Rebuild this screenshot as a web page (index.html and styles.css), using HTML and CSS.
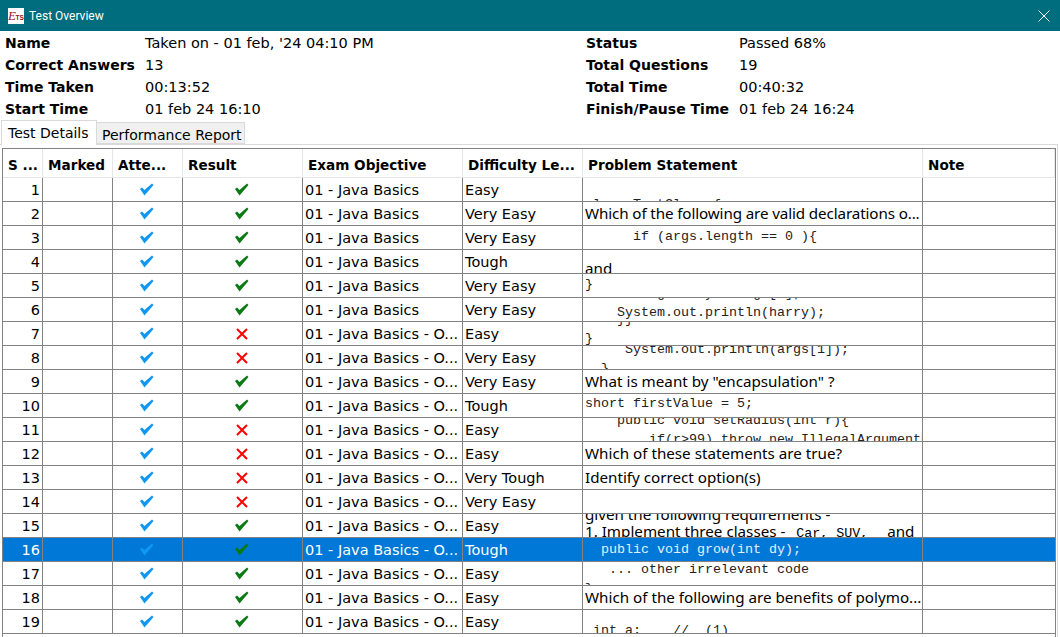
FILE: index.html
```html
<!DOCTYPE html>
<html lang="en">
<head>
    <meta charset="UTF-8">
    <title>Test Overview</title>
    <link rel="stylesheet" href="styles.css">
</head>
<body>
    <svg class="defs" width="0" height="0">
        <symbol id="tick" viewBox="0 0 14 13"><path d="M0 6 L2 4.500 L4.500 7 L12 0.500 L13.500 2 L4.500 12.500 Z"/></symbol>
        <symbol id="cross" viewBox="0 0 12 12"><path d="M1 1 L11 11 M11 1 L1 11" fill="none" stroke="#f00" stroke-width="2"/></symbol>
    </svg>
    <header class="titlebar">
        <span class="logo"><svg width="16" height="16" viewBox="0 0 16 16"><text x="0" y="12" class="logo-e">E</text><text x="7.500" y="12" class="logo-ts">TS</text></svg></span>
        <span class="title">Test Overview</span>
        <svg class="close" width="12" height="12" viewBox="0 0 12 12"><path d="M0.500 0.500 L11.500 11.500 M11.500 0.500 L0.500 11.500" stroke="#fff" fill="none"/></svg>
    </header>
    <section class="info">
        <div class="info-col left">
            <b>Name</b><span>Taken on - 01 feb, '24 04:10 PM</span>
            <b>Correct Answers</b><span>13</span>
            <b>Time Taken</b><span>00:13:52</span>
            <b>Start Time</b><span>01 feb 24 16:10</span>
        </div>
        <div class="info-col right">
            <b>Status</b><span>Passed 68%</span>
            <b>Total Questions</b><span>19</span>
            <b>Total Time</b><span>00:40:32</span>
            <b>Finish/Pause Time</b><span>01 feb 24 16:24</span>
        </div>
    </section>
    <nav class="tabs">
        <a class="tab active">Test Details</a>
        <a class="tab">Performance Report</a>
    </nav>
    <div class="panel">
        <div class="table">
            <div class="row head">
                <div>S ...</div><div>Marked</div><div>Atte...</div><div>Result</div><div>Exam Objective</div><div>Difficulty Le...</div><div>Problem Statement</div><div>Note</div>
            </div>
            <div class="row"><div class="num">1</div><div></div><div class="ico"><svg class="tick"><use href="#tick"/></svg></div><div class="ico"><svg class="ok"><use href="#tick"/></svg></div><div>01 - Java Basics</div><div>Easy</div><div class="prob"><pre class="code c1">class TestClass {</pre></div><div></div></div>
            <div class="row"><div class="num">2</div><div></div><div class="ico"><svg class="tick"><use href="#tick"/></svg></div><div class="ico"><svg class="ok"><use href="#tick"/></svg></div><div>01 - Java Basics</div><div>Very Easy</div><div class="prob tight">Which of the following are valid declarations o...</div><div></div></div>
            <div class="row"><div class="num">3</div><div></div><div class="ico"><svg class="tick"><use href="#tick"/></svg></div><div class="ico"><svg class="ok"><use href="#tick"/></svg></div><div>01 - Java Basics</div><div>Very Easy</div><div class="prob"><pre class="code c3">      if (args.length == 0 ){</pre></div><div></div></div>
            <div class="row"><div class="num">4</div><div></div><div class="ico"><svg class="tick"><use href="#tick"/></svg></div><div class="ico"><svg class="ok"><use href="#tick"/></svg></div><div>01 - Java Basics</div><div>Tough</div><div class="prob"><p class="html h4">and</p></div><div></div></div>
            <div class="row"><div class="num">5</div><div></div><div class="ico"><svg class="tick"><use href="#tick"/></svg></div><div class="ico"><svg class="ok"><use href="#tick"/></svg></div><div>01 - Java Basics</div><div>Very Easy</div><div class="prob"><pre class="code c5">}</pre></div><div></div></div>
            <div class="row"><div class="num">6</div><div></div><div class="ico"><svg class="tick"><use href="#tick"/></svg></div><div class="ico"><svg class="ok"><use href="#tick"/></svg></div><div>01 - Java Basics</div><div>Very Easy</div><div class="prob"><pre class="code c6">    String harry = args[0];
    System.out.println(harry);</pre></div><div></div></div>
            <div class="row"><div class="num">7</div><div></div><div class="ico"><svg class="tick"><use href="#tick"/></svg></div><div class="ico"><svg class="no"><use href="#cross"/></svg></div><div>01 - Java Basics - O...</div><div>Easy</div><div class="prob"><pre class="code c7">    }}
}</pre></div><div></div></div>
            <div class="row"><div class="num">8</div><div></div><div class="ico"><svg class="tick"><use href="#tick"/></svg></div><div class="ico"><svg class="no"><use href="#cross"/></svg></div><div>01 - Java Basics - O...</div><div>Very Easy</div><div class="prob"><pre class="code c8">     System.out.println(args[1]);
  }</pre></div><div></div></div>
            <div class="row"><div class="num">9</div><div></div><div class="ico"><svg class="tick"><use href="#tick"/></svg></div><div class="ico"><svg class="ok"><use href="#tick"/></svg></div><div>01 - Java Basics - O...</div><div>Very Easy</div><div class="prob">What is meant by "encapsulation" ?</div><div></div></div>
            <div class="row"><div class="num">10</div><div></div><div class="ico"><svg class="tick"><use href="#tick"/></svg></div><div class="ico"><svg class="ok"><use href="#tick"/></svg></div><div>01 - Java Basics - O...</div><div>Tough</div><div class="prob"><pre class="code c10">short firstValue = 5;</pre></div><div></div></div>
            <div class="row"><div class="num">11</div><div></div><div class="ico"><svg class="tick"><use href="#tick"/></svg></div><div class="ico"><svg class="no"><use href="#cross"/></svg></div><div>01 - Java Basics - O...</div><div>Easy</div><div class="prob"><pre class="code c11">    public void setRadius(int r){
        if(r&gt;99) throw new IllegalArgumentException();</pre></div><div></div></div>
            <div class="row"><div class="num">12</div><div></div><div class="ico"><svg class="tick"><use href="#tick"/></svg></div><div class="ico"><svg class="no"><use href="#cross"/></svg></div><div>01 - Java Basics - O...</div><div>Easy</div><div class="prob">Which of these statements are true?</div><div></div></div>
            <div class="row"><div class="num">13</div><div></div><div class="ico"><svg class="tick"><use href="#tick"/></svg></div><div class="ico"><svg class="no"><use href="#cross"/></svg></div><div>01 - Java Basics - O...</div><div>Very Tough</div><div class="prob">Identify correct option(s)</div><div></div></div>
            <div class="row"><div class="num">14</div><div></div><div class="ico"><svg class="tick"><use href="#tick"/></svg></div><div class="ico"><svg class="no"><use href="#cross"/></svg></div><div>01 - Java Basics - O...</div><div>Very Easy</div><div class="prob"></div><div></div></div>
            <div class="row"><div class="num">15</div><div></div><div class="ico"><svg class="tick"><use href="#tick"/></svg></div><div class="ico"><svg class="ok"><use href="#tick"/></svg></div><div>01 - Java Basics - O...</div><div>Easy</div><div class="prob"><p class="html h15">given the following requirements -</p><p class="html">1. Implement three classes -&nbsp;&nbsp;<span class="inline-code">Car, SUV,</span>&nbsp;&nbsp;and</p></div><div></div></div>
            <div class="row selected"><div class="num">16</div><div></div><div class="ico"><svg class="tick"><use href="#tick"/></svg></div><div class="ico"><svg class="ok"><use href="#tick"/></svg></div><div>01 - Java Basics - O...</div><div>Tough</div><div class="prob"><pre class="code c16">  public void grow(int dy);</pre></div><div></div></div>
            <div class="row"><div class="num">17</div><div></div><div class="ico"><svg class="tick"><use href="#tick"/></svg></div><div class="ico"><svg class="ok"><use href="#tick"/></svg></div><div>01 - Java Basics - O...</div><div>Easy</div><div class="prob"><pre class="code c17">   ... other irrelevant code
}</pre></div><div></div></div>
            <div class="row"><div class="num">18</div><div></div><div class="ico"><svg class="tick"><use href="#tick"/></svg></div><div class="ico"><svg class="ok"><use href="#tick"/></svg></div><div>01 - Java Basics - O...</div><div>Easy</div><div class="prob">Which of the following are benefits of polymo...</div><div></div></div>
            <div class="row"><div class="num">19</div><div></div><div class="ico"><svg class="tick"><use href="#tick"/></svg></div><div class="ico"><svg class="ok"><use href="#tick"/></svg></div><div>01 - Java Basics - O...</div><div>Easy</div><div class="prob"><pre class="code c19"> int a;    //  (1)</pre></div><div></div></div>
        </div>
    </div>
</body>
</html>
```

FILE: styles.css
```css
html, body {
    margin: 0;
    padding: 0;
    height: 637px;
    overflow: hidden;
    background-color: #fff;
    font-family: "DejaVu Sans", sans-serif;
    font-size: 14.5px;
    color: #000;
}
b {
    font-size: 14px;
}
.defs {
    display: block;
    height: 0;
}
.titlebar {
    display: flex;
    align-items: center;
    height: 31px;
    padding: 0 10px 0 8px;
    box-sizing: border-box;
    background-color: #006d7e;
    color: #fff;
    font-family: Roboto, sans-serif;
    font-size: 12px;
}
.logo {
    display: flex;
    width: 16px;
    height: 16px;
    background-color: #fff;
    margin-right: 5px;
}
.logo-e {
    font-family: "Liberation Serif", serif;
    font-style: italic;
    font-size: 13px;
    fill: #9c1020;
}
.logo-ts {
    font-family: "Liberation Sans", sans-serif;
    font-size: 6.500px;
    font-weight: bold;
    fill: #9c1020;
}
.title {
    flex: 1;
}
.info {
    display: flex;
    height: 88px;
    padding: 1px 0 0 5px;
    box-sizing: border-box;
}
.info-col {
    display: grid;
    grid-auto-rows: 22px;
    align-items: center;
}
.info-col.left {
    width: 581px;
    grid-template-columns: 140px 1fr;
}
.info-col.right {
    grid-template-columns: 153px 1fr;
}
.tabs {
    display: flex;
    align-items: flex-end;
    height: 26px;
    padding-left: 1px;
    margin-bottom: -1px;
    font-size: 14px;
}
.tab {
    box-sizing: border-box;
    width: 148px;
    height: 22px;
    line-height: 24px;
    padding-left: 5px;
    background-color: #f0f0f0;
    border: 1px solid #d9d9d9;
    border-left: none;
    margin-bottom: 1px;
    white-space: nowrap;
    overflow: hidden;
}
.tab.active {
    position: relative;
    width: 96px;
    height: 25px;
    line-height: 24px;
    padding-left: 6px;
    background-color: #fff;
    border-left: 1px solid #d9d9d9;
    border-bottom: none;
    margin-bottom: 0;
}
.panel {
    height: 493px;
    margin-right: 2px;
    padding: 3px 1px 0 2px;
    box-sizing: border-box;
    border-top: 1px solid #d9d9d9;
    border-right: 1px solid #d9d9d9;
}
.table {
    border: 1px solid #828282;
    border-bottom: none;
    height: 100%;
    box-sizing: border-box;
}
.row {
    display: grid;
    grid-template-columns: 40px 70px 70px 120px 160px 120px 340px 1fr;
    height: 24px;
    box-sizing: border-box;
    border-bottom: 1px solid #828282;
}
.row > div {
    box-sizing: border-box;
    border-right: 1px solid #828282;
    padding-left: 2px;
    line-height: 25px;
    white-space: nowrap;
    overflow: hidden;
}
.row > div:last-child {
    border-right: none;
}
.row.head {
    height: 29px;
    border-bottom: 1px solid #e6e6e6;
    font-size: 13.6px;
    font-weight: bold;
}
.row.head > div {
    border-right: 1px solid #e6e6e6;
    padding-left: 5px;
    line-height: 32px;
}
.row > .num {
    text-align: right;
    padding: 0 2px 0 0;
}
.row > .ico {
    display: flex;
    align-items: center;
    justify-content: center;
    padding: 0 2px 0 0;
}
.tick, .ok {
    width: 14px;
    height: 13px;
}
.tick {
    fill: #0f97f5;
}
.ok {
    fill: #0a7a14;
}
.no {
    width: 12px;
    height: 12px;
}
.row > .prob {
    font-family: "Noto Sans", sans-serif;
    font-size: 15.2px;
    line-height: 23px;
}
.tight {
    letter-spacing: -0.12px;
}
.code {
    margin: 0;
    font-family: "Liberation Mono", monospace;
    font-size: 13.33px;
    line-height: 19px;
    color: #222;
}
/* clipped cell contents: each renderer shows its own scroll offset */
.c1 { margin-top: 17px; }
.c3 { margin-top: 1px; }
.c5 { margin-top: 1px; }
.c6 { margin-top: -14px; }
.c7 { margin-top: -12px; }
.c8 { margin-top: -6px; }
.c10 { margin-top: 0; }
.c11 { margin-top: -7px; }
.c16 { margin-top: 2px; }
.c17 { margin-top: -2px; }
.c19 { margin-top: 11px; }
.html {
    margin: 0;
    line-height: 17px;
}
.h4 { margin-top: 10px; }
.h15 { margin-top: -8px; }
.inline-code {
    font-family: "Liberation Mono", monospace;
    font-size: 13.33px;
    margin: 0 11px 0 3px;
}
.selected {
    background-color: #0078d7;
    color: #fff;
}
.selected .code {
    color: #e4f0fb;
}
```
